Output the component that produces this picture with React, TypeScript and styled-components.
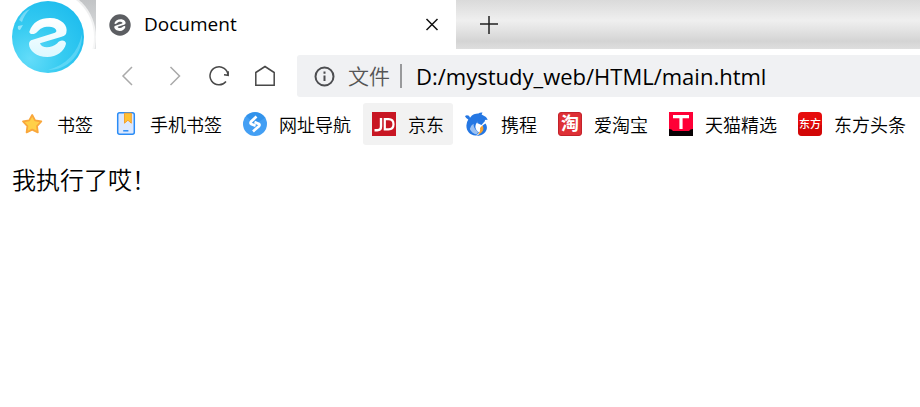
import React from "react";
import styled, { createGlobalStyle, css } from "styled-components";

const GlobalStyle = createGlobalStyle`
  *, *::before, *::after { box-sizing: border-box; }
  body {
    margin: 0;
    background: #fff;
    color: #000;
    font-family: "Open Sans", "Noto Sans CJK SC", sans-serif;
    font-weight: 350;
  }
  button, input { font: inherit; color: inherit; border: 0; padding: 0; background: none; }
  a { color: inherit; text-decoration: none; }
  svg { display: block; flex: none; }
`;

const Chrome = styled.header`
  display: flex;
  flex-direction: column;
  overflow: hidden;
`;

const TabStrip = styled.div`
  display: flex;
  height: 49px;
  background: linear-gradient(#dadada 0, #efefef 42%, #e4e4e4 60%, #d4d4d4 84%, #dedede 100%);
`;

const LogoSlot = styled.div`
  position: relative;
  flex: none;
  width: 96px;
  background: linear-gradient(90deg, #fff 60%, #fff0 80%), linear-gradient(#c2c4c6, #e2e4e5);
`;

const LogoButton = styled.button`
  position: absolute;
  z-index: 1;
  top: -11px;
  left: 0;
  width: 96px;
  height: 96px;
`;

const Tab = styled.div`
  display: flex;
  align-items: center;
  flex: 0 1 360px;
  gap: 12px;
  padding: 0 12px;
  background: #fff;
`;

const TabTitle = styled.span`
  flex: 1;
  font-size: 19px;
  font-weight: 400;
  line-height: 26px;
  padding-bottom: 2px;
`;

const StripButton = styled.button`
  display: grid;
  place-items: center;
  width: 24px;
`;

const NewTab = styled(StripButton)`
  width: 66px;
`;

const Toolbar = styled.div`
  display: flex;
  align-items: center;
  padding: 6px 0 6px 105px;
`;

const ToolButton = styled.button`
  display: grid;
  place-items: center;
  width: 46px;
  height: 42px;
`;

const AddressBar = styled.label`
  display: flex;
  align-items: center;
  flex: 1;
  height: 42px;
  margin-left: 8px;
  padding-left: 16px;
  background: #f0f1f3;
  border-radius: 3px 0 0 3px;
`;

const Scheme = styled.span`
  margin-left: 12px;
  padding-right: 10px;
  border-right: 2px solid #98999b;
  color: #555;
  font-size: 21px;
  line-height: 24px;
`;

const AddressInput = styled.input`
  flex: 1;
  min-width: 0;
  margin-left: 14px;
  outline: 0;
  font-size: 22px;
  font-weight: 400;
  line-height: 32px;
`;

const Bookmarks = styled.nav`
  display: flex;
  gap: 3px;
  padding-left: 12px;
`;

const Bookmark = styled.a<{ $active?: boolean }>`
  display: flex;
  align-items: center;
  flex: none;
  gap: 12px;
  height: 42px;
  padding: 0 9px;
  border-radius: 3px;
  ${(p) => p.$active && css`background: #f2f2f2;`}
`;

const BookmarkLabel = styled.span`
  padding-top: 2px;
  font-size: 18px;
  line-height: 26px;
`;

const Page = styled.main`
  padding: 17px 12px;
  font-size: 24px;
  line-height: 36px;
`;

const Swirl =
  "M88 95C98 66 120 54 150 54C185 54 205 78 199 98C197 107 190 108 185 110L120 130C124 146 154 146 172 130C179 118 197 119 198 131C193 153 170 171 142 171C110 171 87 152 87 132C87 124 91 121 98 119L165 98C175 94 166 80 148 80C127 80 121 86 112 95C105 104 88 105 88 95Z";

const BrowserLogo = () => (
  <svg width="96" height="96" viewBox="0 -11 96 96" aria-hidden="true">
    <defs>
      <radialGradient id="ball" cx=".25" cy=".8" r=".9">
        <stop offset="0" stopColor="#63dcf9" />
        <stop offset=".5" stopColor="#36cbf1" />
        <stop offset="1" stopColor="#1fbdee" />
      </radialGradient>
      <linearGradient id="gloss" x1="0" y1="0" x2="1" y2="1">
        <stop offset="0" stopColor="#fff" stopOpacity=".15" />
        <stop offset="1" stopColor="#fff" stopOpacity=".55" />
      </linearGradient>
      <linearGradient id="swirl" x1="0" y1="0" x2="0" y2="1">
        <stop offset="0" stopColor="#fff" />
        <stop offset="1" stopColor="#dcf8ff" />
      </linearGradient>
    </defs>
    <circle cx="47" cy="37" r="49" fill="#fff" fillOpacity=".7" />
    <circle cx="47" cy="37" r="47" fill="#fff" />
    <circle cx="48" cy="37" r="36" fill="url(#ball)" />
    <path d="M19 20Q22 12 30 9Q24 15 22 22Z" fill="url(#gloss)" />
    <path d="M18 26L23 25L20 30Q17 30 18 26Z" fill="#c6f3ff" fillOpacity=".65" />
    <path d="M82 34C83 54 68 70 48 70C66 65 78 53 82 34Z" fill="#a8efff" fillOpacity=".35" />
    <path d={Swirl} transform="scale(.33333)" fill="url(#swirl)" />
  </svg>
);

const TabIcon = () => (
  <svg width="24" height="24" viewBox="0 0 24 24" aria-hidden="true">
    <circle cx="12" cy="12" r="10.7" fill="#5c5e62" />
    <path d={Swirl} transform="translate(-2.4 .8) scale(.1)" fill="#fff" />
  </svg>
);

const line = { fill: "none", strokeWidth: 1.5, "aria-hidden": true } as const;

const CloseIcon = () => (
  <svg width="14" height="14" viewBox="0 0 14 14" {...line} stroke="#111"><path d="M1.5 1l11 11M12.5 1l-11 11" /></svg>
);
const PlusIcon = () => (
  <svg width="18" height="18" viewBox="0 0 18 18" {...line} stroke="#222"><path d="M0 8h18M9 0v18" /></svg>
);
const BackIcon = () => (
  <svg width="24" height="24" viewBox="0 0 24 24" {...line} stroke="#aaa"><path d="M16 3L7 12l9 9" /></svg>
);
const ForwardIcon = () => (
  <svg width="24" height="24" viewBox="0 0 24 24" {...line} stroke="#aaa"><path d="M8.5 3l9 9-9 9" /></svg>
);
const ReloadIcon = () => (
  <svg width="24" height="24" viewBox="0 0 24 24" {...line} stroke="#484848"><path d="M18 17.5A9 9 0 1 1 20 11.5M16 10.8l4.2.5v-4" /></svg>
);
const HomeIcon = () => (
  <svg width="24" height="24" viewBox="0 0 24 24" {...line} stroke="#484848"><path d="M1.8 8.5L11 2.5l9.2 6V21.3H1.8Z" /></svg>
);
const InfoIcon = () => (
  <svg width="23" height="23" viewBox="0 0 23 23" aria-hidden="true">
    <circle cx="11.5" cy="11.5" r="9" fill="none" stroke="#4c4d50" strokeWidth="2" />
    <path d="M11.5 10.5v5.5M11.5 6.5v2.2" stroke="#4c4d50" strokeWidth="2" />
  </svg>
);

const icons = {
  star: (
    <path d="M11.2 3l2.9 5.4 6.2 1.1-4.3 4.6.8 6.3-5.6-2.8-5.6 2.8.8-6.3L2 9.5l6.2-1.1Z" fill="#ffd048" stroke="#f9a73b" strokeWidth="1.8" strokeLinejoin="round" />
  ),
  phone: (
    <>
      <rect x="3.7" y=".8" width="16.6" height="21.4" rx="2" fill="#dce8fd" stroke="#2a8cf6" strokeWidth="1.5" />
      <path d="M10.5 1.2h6.8v10l-3.4-3-3.4 3Z" fill="#ffc233" stroke="#f5a02d" />
      <path d="M9.2 18.8h5.2" stroke="#2a8cf6" strokeWidth="1.5" />
    </>
  ),
  compass: (
    <>
      <circle cx="12" cy="12" r="12" fill="#439ff4" />
      <path d="M3 4A12 12 0 0 1 22 6L12 12Z" fill="#2589e4" fillOpacity=".55" />
      <path d="M13.5 4.6L8.2 9.5Q6.8 11 8.2 12L12.6 13.8M10 19.4l5.9-5.2q1.3-1.3 0-2.3l-4.4-1.8" fill="none" stroke="#fff" strokeWidth="2.7" />
    </>
  ),
  jd: (
    <>
      <rect width="24" height="24" fill="#c81623" />
      <path d="M9 6v8.5q0 3.7-3.7 3.7H2.5" fill="none" stroke="#fff" strokeWidth="2.4" />
      <path d="M12.8 7.1h3.7q5 0 5 5.1t-5 5.1h-3.7Z" fill="none" stroke="#fff" strokeWidth="2.2" />
    </>
  ),
  dolphin: (
    <>
      <path d="M0 4.3Q1.4 2.4 4 3.8L5 5.8C7.5 2.2 11 1.5 13.5 1.6Q14.5.2 17.5.4L16.6 2.6Q20.5 4 22.8 7.8L18.5 8Q15 7.6 12.8 9.8C9 13.3 10 18 14 20.4L11.5 23.4C5.5 24 1.3 19.5 1.4 13.6Q1.4 10.3 3.3 7.6Q1.2 6.8 0 4.3Z" fill="#2577e3" />
      <path d="M15 5Q20 5 20 9L16.5 13L12 11Z" fill="#2577e3" />
      <path d="M20.4 11.5C24.6 17 19.5 23.8 11.5 24Q18.7 20.5 17.5 13.6Z" fill="#2577e3" />
      <path d="M17.3 13.5C20 17 17.6 21.3 12.8 22.6Q15.8 19 15 16Z" fill="#f8a22c" />
      <path d="M4.8 17q1-4 3.7-5.2-.2 5 4.7 8.3l-1.5 2.5Q6.5 21 4.8 17Z" fill="#fff" fillOpacity=".55" />
    </>
  ),
  taobao: (
    <>
      <rect x=".5" y=".5" width="23" height="23" rx="2.5" fill="#de3036" stroke="#c3222a" />
      <text x="12" y="18" textAnchor="middle" fontSize="18" fontWeight="700" fill="#fff">淘</text>
    </>
  ),
  tmall: (
    <>
      <rect width="24" height="24" fill="#ff0036" />
      <path d="M0 17q3 0 4 2h16q1-2 4-2v7H0Z" fill="#080204" />
      <path d="M4 4.7h16M12 4v13" stroke="#fff" strokeWidth="3.2" />
    </>
  ),
  dongfang: (
    <>
      <rect width="24" height="24" rx="4" fill="#e60c0c" />
      <path d="M0 13h24v7q0 4-4 4H4q-4 0-4-4Z" fill="#bd0000" fillOpacity=".5" />
      <text x="12" y="16" textAnchor="middle" fontSize="11" fontWeight="500" fill="#fff">东方</text>
    </>
  ),
};

const bookmarks: { icon: keyof typeof icons; label: string; active?: boolean }[] = [
  { icon: "star", label: "书签" },
  { icon: "phone", label: "手机书签" },
  { icon: "compass", label: "网址导航" },
  { icon: "jd", label: "京东", active: true },
  { icon: "dolphin", label: "携程" },
  { icon: "taobao", label: "爱淘宝" },
  { icon: "tmall", label: "天猫精选" },
  { icon: "dongfang", label: "东方头条" },
];

export default function App() {
  return (
    <>
      <GlobalStyle />
      <Chrome>
        <TabStrip>
          <LogoSlot>
            <LogoButton aria-label="Browser menu"><BrowserLogo /></LogoButton>
          </LogoSlot>
          <Tab>
            <TabIcon />
            <TabTitle>Document</TabTitle>
            <StripButton aria-label="Close tab"><CloseIcon /></StripButton>
          </Tab>
          <NewTab aria-label="New tab"><PlusIcon /></NewTab>
        </TabStrip>
        <Toolbar>
          <ToolButton aria-label="Back"><BackIcon /></ToolButton>
          <ToolButton aria-label="Forward"><ForwardIcon /></ToolButton>
          <ToolButton aria-label="Reload"><ReloadIcon /></ToolButton>
          <ToolButton aria-label="Home"><HomeIcon /></ToolButton>
          <AddressBar>
            <InfoIcon />
            <Scheme>文件</Scheme>
            <AddressInput aria-label="Address" defaultValue="D:/mystudy_web/HTML/main.html" />
          </AddressBar>
        </Toolbar>
        <Bookmarks aria-label="Bookmarks">
          {bookmarks.map((b) => (
            <Bookmark key={b.label} href="#" $active={b.active}>
              <svg width="24" height="24" viewBox="0 0 24 24" aria-hidden="true">{icons[b.icon]}</svg>
              <BookmarkLabel>{b.label}</BookmarkLabel>
            </Bookmark>
          ))}
        </Bookmarks>
      </Chrome>
      <Page>我执行了哎！</Page>
    </>
  );
}
